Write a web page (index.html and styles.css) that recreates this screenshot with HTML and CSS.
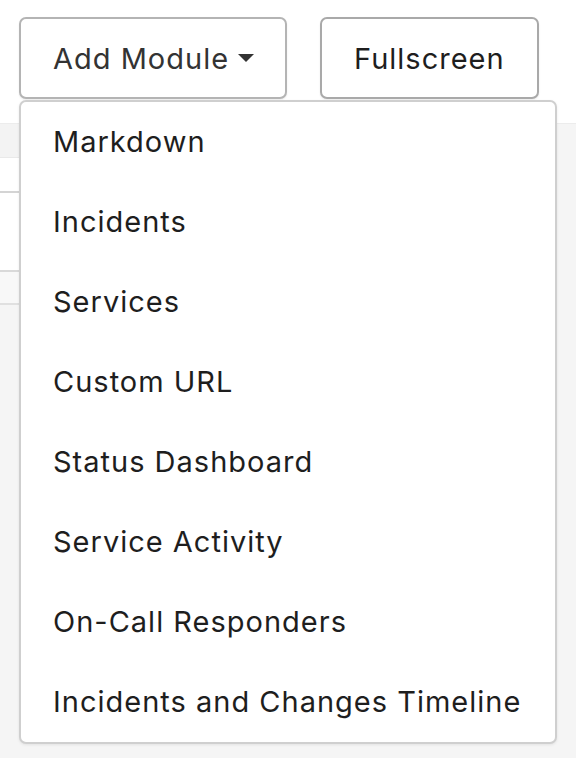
FILE: index.html
```html
<!DOCTYPE html>
<html lang="en">
<head>
<meta charset="utf-8">
<title>Dashboard</title>
<link rel="stylesheet" href="styles.css">
</head>
<body>
<header class="toolbar">
  <div class="dropdown">
    <button class="btn btn-open" type="button"><span class="label">Add Module</span><span class="caret"></span></button>
    <ul class="menu">
      <li class="menu-item">Markdown</li>
      <li class="menu-item">Incidents</li>
      <li class="menu-item">Services</li>
      <li class="menu-item">Custom URL</li>
      <li class="menu-item">Status Dashboard</li>
      <li class="menu-item">Service Activity</li>
      <li class="menu-item">On-Call Responders</li>
      <li class="menu-item">Incidents and Changes Timeline</li>
    </ul>
  </div>
  <button class="btn" type="button">Fullscreen</button>
</header>
<main class="content">
  <div class="panel">
    <div class="row row-head"></div>
    <div class="row row-title"></div>
    <div class="row row-body"></div>
    <div class="row row-foot"></div>
  </div>
</main>
</body>
</html>
```
FILE: styles.css
```css
* { box-sizing: border-box; }
html, body {
  margin: 0;
  padding: 0;
  height: 100%;
}
body {
  font-family: Inter, "Noto Sans", "Liberation Sans", sans-serif;
  color: #222;
  background: #f5f5f5;
}
.toolbar {
  background: #fff;
  height: 124px;
  padding: 17px 0 0 19px;
  display: flex;
  align-items: flex-start;
  gap: 33px;
  border-bottom: 1px solid #ececec;
}
.dropdown {
  position: relative;
}
.btn {
  font-family: inherit;
  font-size: 29px;
  line-height: 1;
  letter-spacing: 1px;
  white-space: nowrap;
  color: #1e1e1e;
  background: #fff;
  height: 82px;
  padding: 0 32px;
  border: 2px solid #a9a9a9;
  border-radius: 7px;
  display: flex;
  align-items: center;
  gap: 9px;
  box-shadow: 0 1px 2px rgba(0,0,0,0.08);
}
.btn-open {
  color: #333;
  border-color: #b4b4b4;
  width: 268px;
  padding-right: 0;
}
.label {
  white-space: nowrap;
}
.caret {
  flex: none;
  width: 0;
  height: 0;
  border-left: 8px solid transparent;
  border-right: 8px solid transparent;
  border-top: 8px solid #333;
}
.menu {
  position: absolute;
  top: 83px;
  left: 0;
  width: 538px;
  margin: 0;
  padding: 0;
  list-style: none;
  background: #fff;
  border: 2px solid #cfcfcf;
  border-radius: 7px;
  box-shadow: 0 1px 3px rgba(0,0,0,0.08);
  z-index: 10;
}
.menu-item {
  height: 80px;
  display: flex;
  align-items: center;
  padding-left: 32px;
  padding-bottom: 2px;
  font-size: 29px;
  letter-spacing: 1px;
  white-space: nowrap;
  color: #1e1e1e;
}
.content {
  padding: 0;
}
.panel {
  width: 545px;
}
.row-head {
  height: 34px;
  background: #f3f3f3;
  border-bottom: 1px solid #e9e9e9;
}
.row-title {
  height: 35px;
  background: #fff;
  border-bottom: 2px solid #d4d4d4;
}
.row-body {
  height: 79px;
  background: #fff;
  border-bottom: 2px solid #d9d9d9;
}
.row-foot {
  height: 33px;
  background: #f8f8f8;
  border-bottom: 2px solid #e0e0e0;
}
```
